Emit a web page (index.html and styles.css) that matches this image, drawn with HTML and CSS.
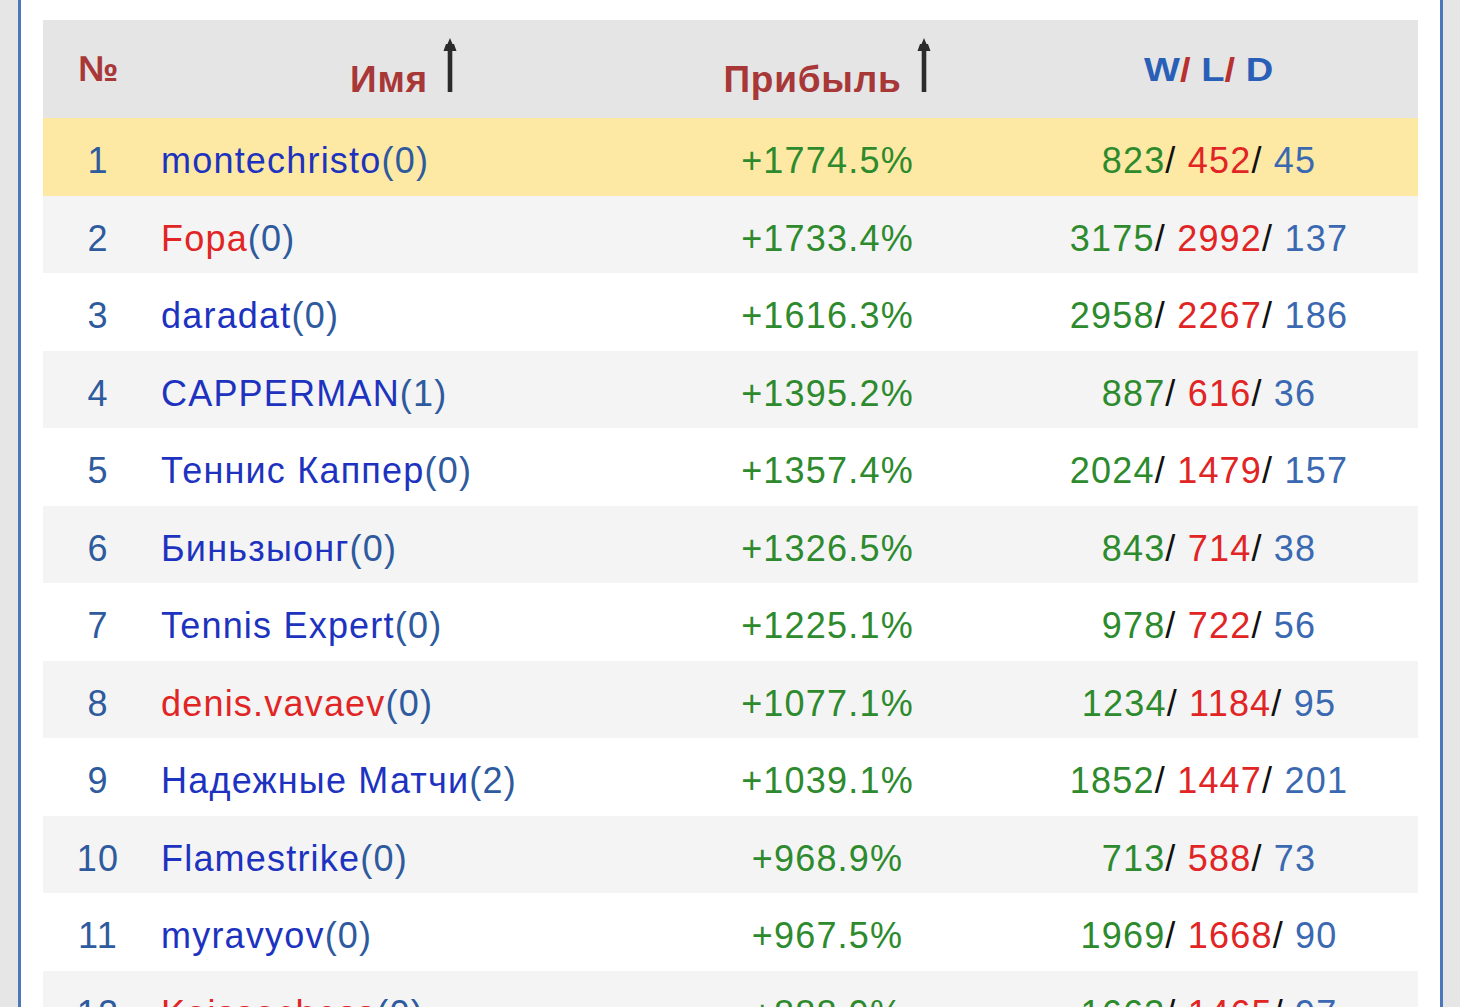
FILE: index.html
```html
<!DOCTYPE html>
<html lang="ru">
<head>
<meta charset="utf-8">
<title>Рейтинг</title>
<link rel="stylesheet" href="styles.css">
</head>
<body>
<div class="frame">
  <table class="rating">
    <colgroup>
      <col class="c-num"><col class="c-name"><col class="c-profit"><col class="c-wld">
    </colgroup>
    <thead>
      <tr>
        <th class="h-num">№</th>
        <th>Имя<svg class="sort" viewBox="0 0 16 54" width="16" height="54"><path d="M8 0 L10.5 6 L12 6 L14.5 13 L10.3 13 L10.3 54 L5.7 54 L5.7 13 L1.5 13 L4 6 L5.5 6 Z"/></svg></th>
        <th>Прибыль<svg class="sort" viewBox="0 0 16 54" width="16" height="54"><path d="M8 0 L10.5 6 L12 6 L14.5 13 L10.3 13 L10.3 54 L5.7 54 L5.7 13 L1.5 13 L4 6 L5.5 6 Z"/></svg></th>
        <th class="h-wld"><span class="wld-title"><span class="b">W</span><span class="r">/</span><span class="b"> L</span><span class="r">/</span><span class="b"> D</span></span></th>
      </tr>
    </thead>
    <tbody>
      <tr class="top"><td class="num">1</td><td class="name"><a class="u">montechristo</a><span class="cnt">(0)</span></td><td class="profit">+1774.5%</td><td class="wld"><span class="w">823</span>/ <span class="l">452</span>/ <span class="d">45</span></td></tr>
      <tr><td class="num">2</td><td class="name"><a class="u red">Fopa</a><span class="cnt">(0)</span></td><td class="profit">+1733.4%</td><td class="wld"><span class="w">3175</span>/ <span class="l">2992</span>/ <span class="d">137</span></td></tr>
      <tr><td class="num">3</td><td class="name"><a class="u">daradat</a><span class="cnt">(0)</span></td><td class="profit">+1616.3%</td><td class="wld"><span class="w">2958</span>/ <span class="l">2267</span>/ <span class="d">186</span></td></tr>
      <tr><td class="num">4</td><td class="name"><a class="u">CAPPERMAN</a><span class="cnt">(1)</span></td><td class="profit">+1395.2%</td><td class="wld"><span class="w">887</span>/ <span class="l">616</span>/ <span class="d">36</span></td></tr>
      <tr><td class="num">5</td><td class="name"><a class="u">Теннис Каппер</a><span class="cnt">(0)</span></td><td class="profit">+1357.4%</td><td class="wld"><span class="w">2024</span>/ <span class="l">1479</span>/ <span class="d">157</span></td></tr>
      <tr><td class="num">6</td><td class="name"><a class="u">Биньзыонг</a><span class="cnt">(0)</span></td><td class="profit">+1326.5%</td><td class="wld"><span class="w">843</span>/ <span class="l">714</span>/ <span class="d">38</span></td></tr>
      <tr><td class="num">7</td><td class="name"><a class="u">Tennis Expert</a><span class="cnt">(0)</span></td><td class="profit">+1225.1%</td><td class="wld"><span class="w">978</span>/ <span class="l">722</span>/ <span class="d">56</span></td></tr>
      <tr><td class="num">8</td><td class="name"><a class="u red">denis.vavaev</a><span class="cnt">(0)</span></td><td class="profit">+1077.1%</td><td class="wld"><span class="w">1234</span>/ <span class="l">1184</span>/ <span class="d">95</span></td></tr>
      <tr><td class="num">9</td><td class="name"><a class="u">Надежные Матчи</a><span class="cnt">(2)</span></td><td class="profit">+1039.1%</td><td class="wld"><span class="w">1852</span>/ <span class="l">1447</span>/ <span class="d">201</span></td></tr>
      <tr><td class="num">10</td><td class="name"><a class="u">Flamestrike</a><span class="cnt">(0)</span></td><td class="profit">+968.9%</td><td class="wld"><span class="w">713</span>/ <span class="l">588</span>/ <span class="d">73</span></td></tr>
      <tr><td class="num">11</td><td class="name"><a class="u">myravyov</a><span class="cnt">(0)</span></td><td class="profit">+967.5%</td><td class="wld"><span class="w">1969</span>/ <span class="l">1668</span>/ <span class="d">90</span></td></tr>
      <tr><td class="num">12</td><td class="name"><a class="u red">Kaissachess</a><span class="cnt">(0)</span></td><td class="profit">+888.9%</td><td class="wld"><span class="w">1663</span>/ <span class="l">1465</span>/ <span class="d">97</span></td></tr>
    </tbody>
  </table>
</div>
</body>
</html>
```
FILE: styles.css
```css
html, body {
  margin: 0;
  padding: 0;
  height: 100%;
  overflow: hidden;
}
body {
  background: #e6e6e6;
  font-family: "Liberation Sans", Arial, sans-serif;
}
.frame {
  margin: 0 17px 0 18px;
  min-height: 100vh;
  box-sizing: border-box;
  background: #ffffff;
  border-left: 3px solid #4a78bb;
  border-right: 3px solid #4a78bb;
  padding: 20px 22px 0 22px;
}
.rating {
  width: 1375px;
  table-layout: fixed;
  border-collapse: collapse;
  border-spacing: 0;
}
.c-num { width: 110px; }
.c-name { width: 502px; }
.c-profit { width: 345px; }
.c-wld { width: 418px; }

thead tr {
  background: #e5e5e5;
  height: 98px;
}
th {
  padding: 0;
  font-size: 37px;
  font-weight: bold;
  color: #a83838;
  letter-spacing: 0.8px;
  text-align: center;
  vertical-align: middle;
  white-space: nowrap;
}
.h-num {
  font-size: 36px;
  letter-spacing: 0;
}
.sort {
  display: inline-block;
  margin-left: 14px;
  fill: #2b2b2b;
  vertical-align: baseline;
}
.h-wld { padding-top: 0; }
.wld-title {
  display: inline-block;
  font-size: 34px;
  letter-spacing: 0;
  transform: scaleX(1.12);
}
.wld-title .b { color: #2a5fb8; }
.wld-title .r { color: #b83030; }

tbody tr {
  height: 77.5px;
  background: #ffffff;
}
tbody tr:nth-child(even) { background: #f4f4f4; }
tbody tr.top { background: #fde9a4; }

td {
  padding: 9px 0 0 0;
  font-size: 36px;
  letter-spacing: 1.2px;
  vertical-align: middle;
  white-space: nowrap;
  overflow: hidden;
}
.num {
  text-align: center;
  color: #2e5a9e;
}
.name {
  text-align: left;
  padding-left: 8px;
}
.u { color: #1d33bf; text-decoration: none; }
.u.red { color: #e12424; }
.cnt { color: #2e5a9e; }
.profit {
  text-align: center;
  color: #2d8a2d;
}
.wld {
  text-align: center;
  color: #111111;
}
.wld .w { color: #2d8a2d; }
.wld .l { color: #e12424; }
.wld .d { color: #3a69b2; }
```
